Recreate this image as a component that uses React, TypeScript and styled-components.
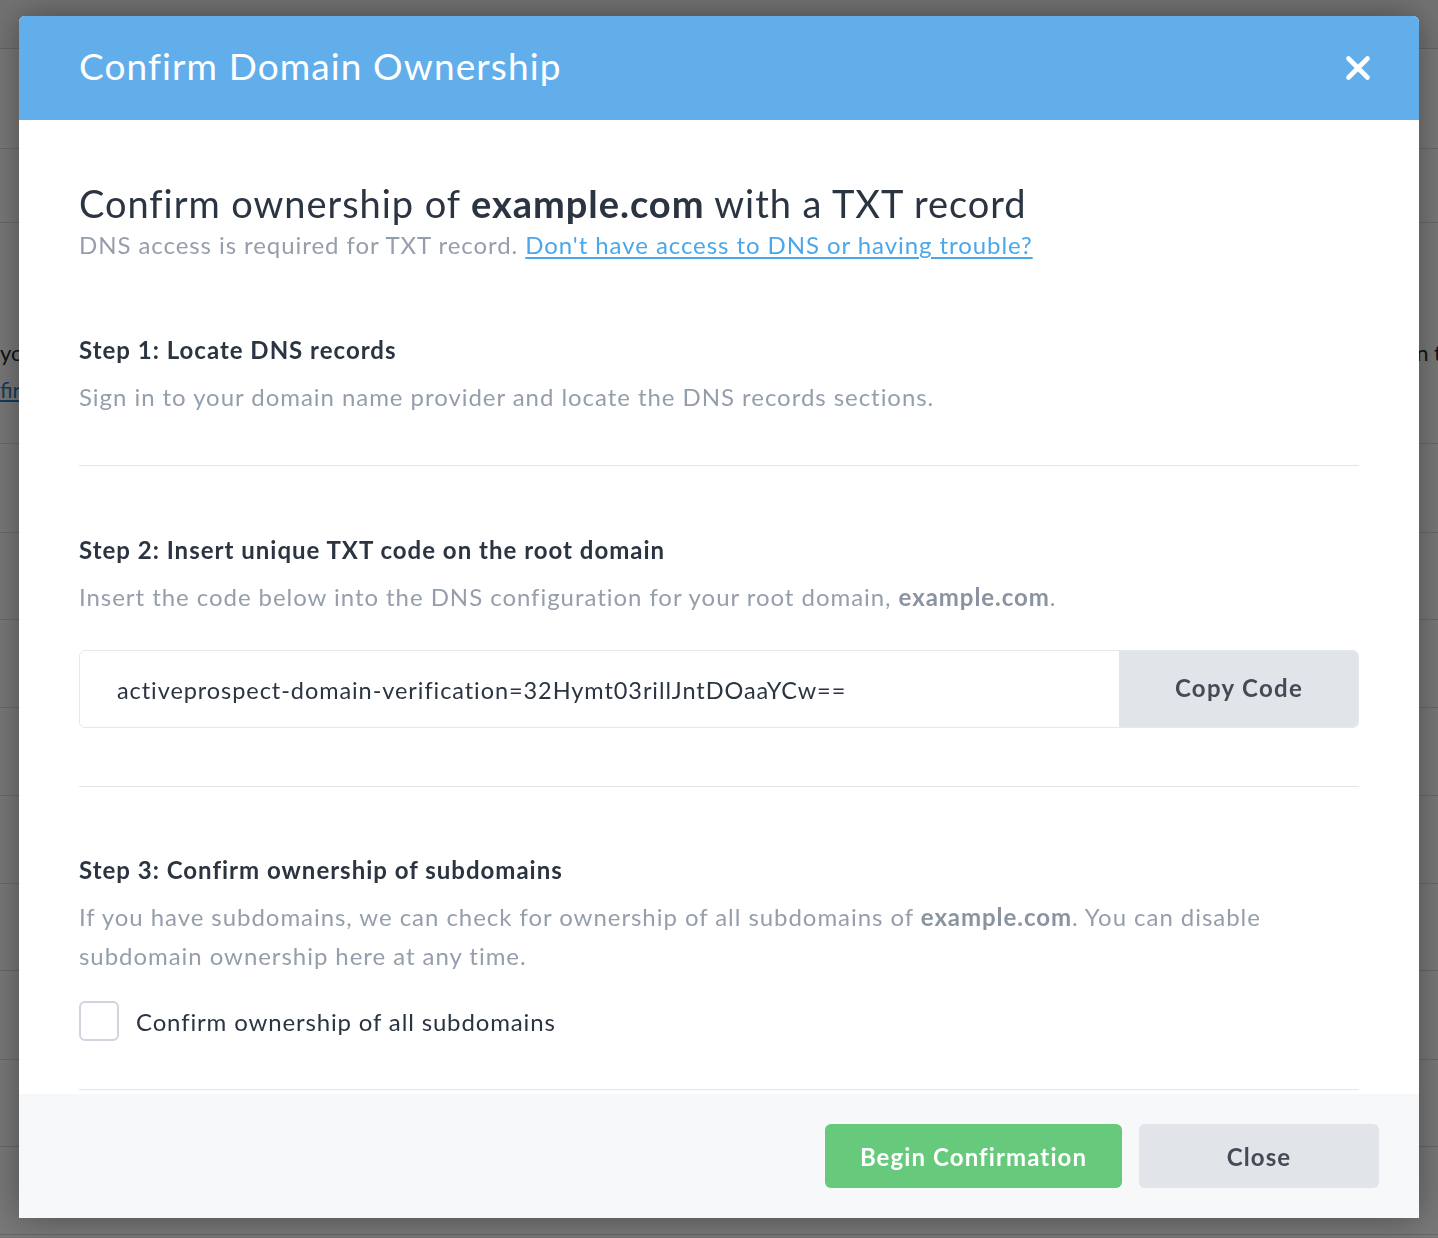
import React from "react";
import styled, { createGlobalStyle } from "styled-components";

const GlobalStyle = createGlobalStyle`
  * { box-sizing: border-box; }
  html, body { margin: 0; padding: 0; }
  body {
    font-family: Lato, "Liberation Sans", sans-serif;
    background: #ffffff;
    overflow: hidden;
  }
`;

/* ---------- page underneath the dialog ---------- */

const Page = styled.div`
  width: 1438px;
  height: 1238px;
  background: #ffffff;
  overflow: hidden;
`;

const TopBar = styled.div`
  height: 49px;
  background: #f3f3f3;
  border-bottom: 1px solid #d6d6d6;
`;

const PageRow = styled.div<{ $h: number; $top?: number }>`
  height: ${(p) => p.$h}px;
  padding-top: ${(p) => p.$top ?? 0}px;
  border-bottom: 1px solid #dcdcdc;
  display: flex;
  flex-direction: column;
  overflow: hidden;
`;

const PageLine = styled.div`
  display: flex;
  justify-content: space-between;
  white-space: nowrap;
  margin-right: -4px;
  font-size: 22px;
  line-height: 37px;
  color: #222831;
`;

const PageLink = styled.span`
  color: #2f7fc6;
  text-decoration: underline;
`;

const Overlay = styled.div`
  position: fixed;
  inset: 0;
  background: rgba(0, 0, 0, 0.53);
`;

/* ---------- dialog ---------- */

const Dialog = styled.div`
  position: fixed;
  top: 16px;
  left: 19px;
  width: 1400px;
  background: #ffffff;
  border-radius: 6px 6px 0 0;
  box-shadow: 0 0 36px rgba(0, 0, 0, 0.38);
  display: flex;
  flex-direction: column;
`;

const Header = styled.div`
  height: 104px;
  background: #61aeeb;
  border-radius: 6px 6px 0 0;
  display: flex;
  align-items: center;
  justify-content: space-between;
  padding: 0 48px 5px 60px;
`;

const HeaderTitle = styled.h2`
  margin: 0;
  font-size: 37px;
  font-weight: 400;
  color: #ffffff;
  letter-spacing: 1.1px;
`;

const CloseButton = styled.button`
  width: 26px;
  height: 26px;
  padding: 0;
  margin-top: 4px;
  border: 0;
  background: transparent;
  display: flex;
  align-items: center;
  justify-content: center;
  cursor: pointer;
`;

const Body = styled.div`
  padding: 60px 60px 4px 60px;
`;

const Intro = styled.div`
  padding-bottom: 2px;
`;

const Heading = styled.h1`
  margin: 0;
  font-size: 38px;
  line-height: 46px;
  font-weight: 400;
  color: #2b3441;
  letter-spacing: 0.95px;
  b { font-weight: 700; }
`;

const Subtitle = styled.p`
  margin: 0;
  font-size: 24px;
  line-height: 38px;
  color: #959eab;
  letter-spacing: 0.93px;
`;

const HelpLink = styled.a`
  color: #4ba7ea;
  text-decoration: underline;
  text-underline-offset: 3px;
`;

const Section = styled.section<{ $top: number; $bottom: number }>`
  padding: ${(p) => p.$top}px 0 ${(p) => p.$bottom}px;
  border-bottom: 1px solid #e3e5e9;
`;

const StepTitle = styled.h3`
  margin: 0 0 12px;
  font-size: 24px;
  line-height: 30px;
  font-weight: 700;
  color: #2b3441;
  letter-spacing: 1px;
`;

const StepText = styled.p`
  margin: 0;
  font-size: 24px;
  line-height: 39px;
  color: #959eab;
  letter-spacing: 0.95px;
  b { font-weight: 700; color: #8a93a0; }
`;

const CodeField = styled.div`
  margin-top: 34px;
  height: 78px;
  display: flex;
  border: 1px solid #e6e8ec;
  border-radius: 6px;
  overflow: hidden;
`;

const CodeValue = styled.div`
  flex: 1;
  display: flex;
  align-items: center;
  padding: 2px 0 0 37px;
  font-size: 23.5px;
  color: #2b3441;
  letter-spacing: 0.93px;
`;

const Button = styled.button<{ $variant: "primary" | "muted"; $width: number }>`
  width: ${(p) => p.$width}px;
  border: 0;
  border-radius: 6px;
  font-family: inherit;
  font-size: 24px;
  font-weight: 700;
  letter-spacing: 1.1px;
  cursor: pointer;
  background: ${(p) => (p.$variant === "primary" ? "#66c97c" : "#e1e4e9")};
  color: ${(p) => (p.$variant === "primary" ? "#ffffff" : "#444b56")};
`;

const CopyButton = styled(Button)`
  border-radius: 0;
  margin: -1px -1px -1px 0;
  padding-bottom: 4px;
  letter-spacing: 1.3px;
`;

const CheckRow = styled.label`
  margin-top: 26px;
  display: flex;
  align-items: center;
  gap: 17px;
  cursor: pointer;
`;

const CheckBox = styled.span`
  width: 40px;
  height: 40px;
  border: 2px solid #d0d5dd;
  border-radius: 6px;
  background: #ffffff;
`;

const CheckLabel = styled.span`
  font-size: 24px;
  color: #2b3441;
  letter-spacing: 0.85px;
`;

const Footer = styled.div`
  height: 124px;
  background: #f7f8fa;
  display: flex;
  align-items: center;
  justify-content: flex-end;
  gap: 17px;
  padding: 0 40px;
`;

const FooterButton = styled(Button)`
  height: 64px;
`;

const CloseIcon = () => (
  <svg width="26" height="26" viewBox="0 0 26 26" fill="none">
    <path
      d="M3.5 3.5 L22.5 22.5 M22.5 3.5 L3.5 22.5"
      stroke="#ffffff"
      strokeWidth="4.6"
      strokeLinecap="round"
    />
  </svg>
);

export default function App() {
  return (
    <>
      <GlobalStyle />
      <Page>
        <TopBar />
        <PageRow $h={100} />
        <PageRow $h={74} />
        <PageRow $h={221} $top={111}>
          <PageLine>
            <span>you</span>
            <span>n t</span>
          </PageLine>
          <PageLine>
            <PageLink>firm</PageLink>
          </PageLine>
        </PageRow>
        {[89, 87, 88, 88, 88, 87, 89, 87, 88].map((h, i) => (
          <PageRow key={i} $h={h} />
        ))}
      </Page>
      <Overlay />
      <Dialog role="dialog" aria-labelledby="dialog-title">
        <Header>
          <HeaderTitle id="dialog-title">Confirm Domain Ownership</HeaderTitle>
          <CloseButton aria-label="Close">
            <CloseIcon />
          </CloseButton>
        </Header>
        <Body>
          <Intro>
            <Heading>
              Confirm ownership of <b>example.com</b> with a TXT record
            </Heading>
            <Subtitle>
              DNS access is required for TXT record.{" "}
              <HelpLink href="#">Don't have access to DNS or having trouble?</HelpLink>
            </Subtitle>
          </Intro>

          <Section $top={69} $bottom={49}>
            <StepTitle>Step 1: Locate DNS records</StepTitle>
            <StepText>
              Sign in to your domain name provider and locate the DNS records sections.
            </StepText>
          </Section>

          <Section $top={69} $bottom={58}>
            <StepTitle>Step 2: Insert unique TXT code on the root domain</StepTitle>
            <StepText>
              Insert the code below into the DNS configuration for your root domain,{" "}
              <b>example.com</b>.
            </StepText>
            <CodeField>
              <CodeValue>activeprospect-domain-verification=32Hymt03rillJntDOaaYCw==</CodeValue>
              <CopyButton $variant="muted" $width={240}>
                Copy Code
              </CopyButton>
            </CodeField>
          </Section>

          <Section $top={68} $bottom={48}>
            <StepTitle>Step 3: Confirm ownership of subdomains</StepTitle>
            <StepText>
              If you have subdomains, we can check for ownership of all subdomains of{" "}
              <b>example.com</b>. You can disable
              <br />
              subdomain ownership here at any time.
            </StepText>
            <CheckRow>
              <CheckBox />
              <CheckLabel>Confirm ownership of all subdomains</CheckLabel>
            </CheckRow>
          </Section>
        </Body>
        <Footer>
          <FooterButton $variant="primary" $width={297}>
            Begin Confirmation
          </FooterButton>
          <FooterButton $variant="muted" $width={240}>
            Close
          </FooterButton>
        </Footer>
      </Dialog>
    </>
  );
}
